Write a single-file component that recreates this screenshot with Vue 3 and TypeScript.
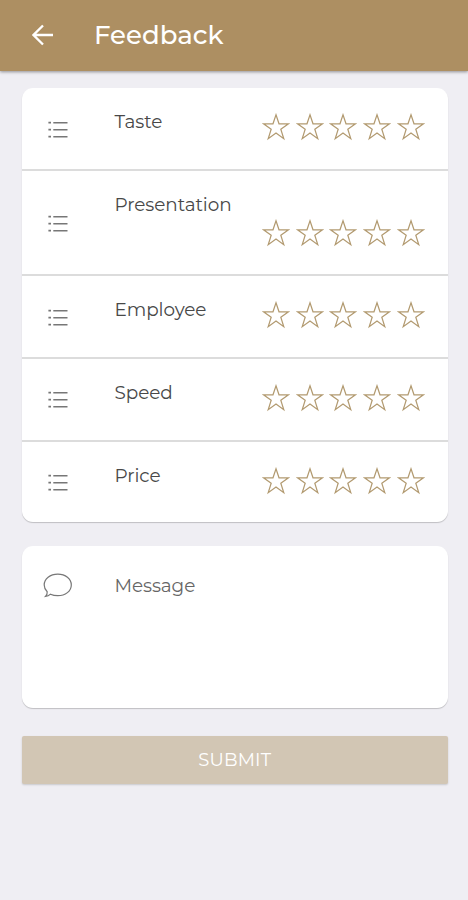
<script setup lang="ts">
import { ref } from 'vue'

interface Criterion {
  name: string
  kind: string
  rating: number
}

const criteria = ref<Criterion[]>([
  { name: 'Taste', kind: 'taste', rating: 0 },
  { name: 'Presentation', kind: 'presentation', rating: 0 },
  { name: 'Employee', kind: 'employee', rating: 0 },
  { name: 'Speed', kind: 'speed', rating: 0 },
  { name: 'Price', kind: 'price', rating: 0 },
])
</script>

<template>
  <div class="screen">
    <header class="bar">
      <svg class="back" viewBox="0 0 22 22">
        <path d="M21 11H1.8M11 1.5L1.5 11L11 20.5" />
      </svg>
      <h1 class="title">Feedback</h1>
    </header>

    <main class="content">
      <section class="card">
        <div v-for="item in criteria" :key="item.kind" class="row" :class="item.kind">
          <svg class="list" viewBox="0 0 20 18">
            <path class="dots" d="M0.4 1.7h2.6M0.4 8.7h2.6M0.4 15.7h2.6" />
            <path d="M5.3 1.7h14.2M5.3 8.7h14.2M5.3 15.7h14.2" />
          </svg>
          <span class="label">{{ item.name }}</span>
          <div class="stars">
            <svg
              v-for="n in 5"
              :key="n"
              class="star"
              :class="{ filled: n <= item.rating }"
              viewBox="0 0 28 28"
              @click="item.rating = n"
            >
              <path d="M14 1.8L17 10.8H26.5L18.8 16.3L21.8 25.7L14 20L6.2 25.7L9.2 16.3L1.5 10.8H11Z" />
            </svg>
          </div>
        </div>
      </section>

      <section class="card message">
        <svg class="bubble" viewBox="0 0 30 26">
          <path d="M4.2 18.7C2.2 16.8 1.2 14.5 1.2 12C1.2 5.9 7.1 1.2 14.8 1.2S28.3 5.9 28.3 12S22.4 22.7 14.8 22.7C12 22.7 9.6 22.2 7.5 21.2C6.1 22.6 4.2 23.4 2.5 23.5C4 22.2 4.3 20.4 4.2 18.7Z" />
        </svg>
        <span class="label">Message</span>
      </section>

      <button class="submit" type="button">SUBMIT</button>
    </main>
  </div>
</template>

<style>
body {
  background: #efeef3;
}
</style>

<style scoped>
.screen {
  min-height: 900px;
  background: #efeef3;
  font-family: Montserrat, Inter, sans-serif;
}

.bar {
  display: flex;
  align-items: center;
  box-sizing: border-box;
  height: 71px;
  padding: 0 0 2px 32px;
  background: #ad8f62;
  box-shadow: 0 1px 3px rgba(0, 0, 0, 0.4);
}

.back {
  width: 22px;
  height: 22px;
  fill: none;
  stroke: #fff;
  stroke-width: 2.3;
}

.title {
  margin: 0 0 0 40px;
  color: #fff;
  font-size: 26px;
  font-weight: 500;
  line-height: 32px;
}

.content {
  padding: 17px 20px 0 21.5px;
}

.card {
  background: #fff;
  border-radius: 11px;
  box-shadow: 0 1px 1px rgba(0, 0, 0, 0.2);
}

.row {
  display: flex;
  align-items: flex-start;
  box-sizing: border-box;
  height: 82.75px;
  padding: 22.25px 23.4px 0 26px;
  border-bottom: 2px solid #dcdcdc;
}

.row:last-child {
  height: 80.75px;
  border-bottom: 0;
}

.row.presentation {
  height: 105.25px;
}

.list {
  width: 20px;
  height: 18px;
  margin-top: 10.4px;
  fill: none;
  stroke: #777;
  stroke-width: 1.4;
}

.dots {
  stroke-width: 1.8;
}

.presentation .list {
  margin-top: 21.5px;
}

.label {
  margin-left: 47px;
  color: #484848;
  font-size: 18.4px;
  font-weight: 400;
  line-height: 24px;
  letter-spacing: -0.07px;
}

.stars {
  display: flex;
  gap: 5.65px;
  margin: 3px 0 0 auto;
}

.presentation .stars {
  margin-top: 26px;
}

.star {
  width: 28px;
  height: 28px;
  fill: none;
  stroke: #b29a70;
  stroke-width: 1.2;
}

.star.filled {
  fill: #b29a70;
}

.message {
  display: flex;
  align-items: flex-start;
  box-sizing: border-box;
  height: 162px;
  margin-top: 24px;
  padding: 27px 21px 0;
}

.bubble {
  width: 30px;
  height: 26px;
  fill: none;
  stroke: #777;
  stroke-width: 1.2;
}

.message .label {
  margin: 1px 0 0 42px;
  color: #666;
}

.submit {
  display: block;
  width: 100%;
  height: 48px;
  margin-top: 28px;
  padding: 0;
  border: 0;
  border-radius: 2px;
  background: #d2c6b4;
  box-shadow: 0 1px 2px rgba(0, 0, 0, 0.16);
  color: #fff;
  font-family: inherit;
  font-size: 18px;
  font-weight: 400;
  letter-spacing: 0.2px;
}
</style>
